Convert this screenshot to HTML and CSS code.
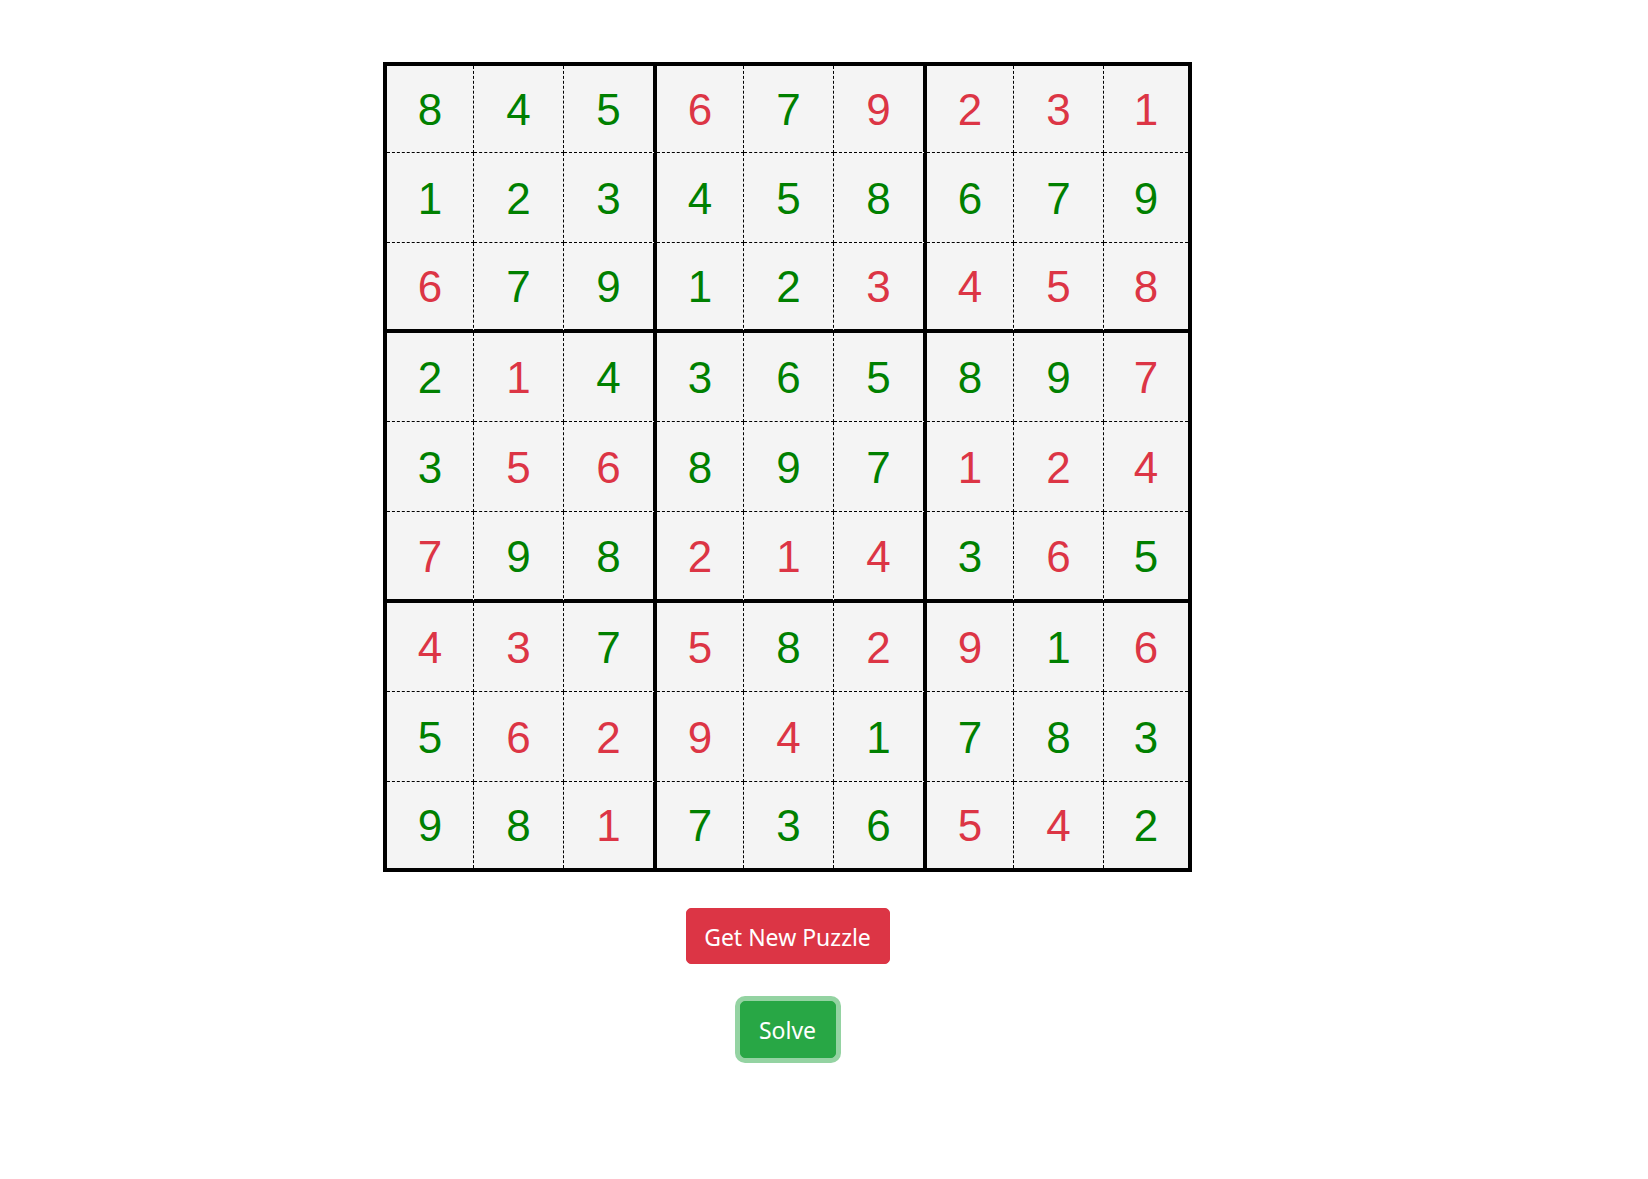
FILE: index.html
```html
<!DOCTYPE html>
<html lang="en">
<head>
<meta charset="utf-8">
<title>Sudoku</title>
<link rel="stylesheet" href="styles.css">
</head>
<body>
<div class="page">
  <div class="board">
    <div class="cell g">8</div><div class="cell g">4</div><div class="cell g">5</div><div class="cell r">6</div><div class="cell g">7</div><div class="cell r">9</div><div class="cell r">2</div><div class="cell r">3</div><div class="cell r">1</div>
    <div class="cell g">1</div><div class="cell g">2</div><div class="cell g">3</div><div class="cell g">4</div><div class="cell g">5</div><div class="cell g">8</div><div class="cell g">6</div><div class="cell g">7</div><div class="cell g">9</div>
    <div class="cell r">6</div><div class="cell g">7</div><div class="cell g">9</div><div class="cell g">1</div><div class="cell g">2</div><div class="cell r">3</div><div class="cell r">4</div><div class="cell r">5</div><div class="cell r">8</div>
    <div class="cell g">2</div><div class="cell r">1</div><div class="cell g">4</div><div class="cell g">3</div><div class="cell g">6</div><div class="cell g">5</div><div class="cell g">8</div><div class="cell g">9</div><div class="cell r">7</div>
    <div class="cell g">3</div><div class="cell r">5</div><div class="cell r">6</div><div class="cell g">8</div><div class="cell g">9</div><div class="cell g">7</div><div class="cell r">1</div><div class="cell r">2</div><div class="cell r">4</div>
    <div class="cell r">7</div><div class="cell g">9</div><div class="cell g">8</div><div class="cell r">2</div><div class="cell r">1</div><div class="cell r">4</div><div class="cell g">3</div><div class="cell r">6</div><div class="cell g">5</div>
    <div class="cell r">4</div><div class="cell r">3</div><div class="cell g">7</div><div class="cell r">5</div><div class="cell g">8</div><div class="cell r">2</div><div class="cell r">9</div><div class="cell g">1</div><div class="cell r">6</div>
    <div class="cell g">5</div><div class="cell r">6</div><div class="cell r">2</div><div class="cell r">9</div><div class="cell r">4</div><div class="cell g">1</div><div class="cell g">7</div><div class="cell g">8</div><div class="cell g">3</div>
    <div class="cell g">9</div><div class="cell g">8</div><div class="cell r">1</div><div class="cell g">7</div><div class="cell g">3</div><div class="cell g">6</div><div class="cell r">5</div><div class="cell r">4</div><div class="cell g">2</div>
  </div>
  <button class="btn btn-danger" type="button">Get New Puzzle</button>
  <button class="btn btn-success focused" type="button">Solve</button>
</div>
</body>
</html>
```

FILE: styles.css
```css
html, body {
  margin: 0;
  padding: 0;
  background: #ffffff;
}

.page {
  width: 1575px;
  padding-top: 62px;
  padding-bottom: 40px;
  display: flex;
  flex-direction: column;
  align-items: center;
  font-family: "Noto Sans", "Open Sans", sans-serif;
}

.board {
  display: grid;
  grid-template-columns: 87px 90px 93px 87px 90px 93px 87px 90px 84px;
  grid-template-rows: 87px 90px 90px 89px 90px 91px 89px 90px 86px;
  border: 4px solid #000;
  background: #f4f4f4;
}

.cell {
  box-sizing: border-box;
  display: flex;
  align-items: center;
  justify-content: center;
  padding-top: 2px;
  border-right: 1px dashed #000;
  border-bottom: 1px dashed #000;
  font-family: "Liberation Sans", Arial, sans-serif;
  font-size: 44px;
  line-height: 1;
}

.cell:nth-child(9n+3),
.cell:nth-child(9n+6) {
  border-right: 4px solid #000;
}

.cell:nth-child(9n) {
  border-right: none;
}

.cell:nth-child(n+19):nth-child(-n+27),
.cell:nth-child(n+46):nth-child(-n+54) {
  border-bottom: 4px solid #000;
}

.cell:nth-child(n+73) {
  border-bottom: none;
}

.g { color: #008000; }
.r { color: #dc3545; }

.btn {
  display: inline-flex;
  align-items: center;
  justify-content: center;
  box-sizing: border-box;
  border: 1px solid transparent;
  border-radius: 5px;
  color: #fff;
  font-family: "Noto Sans", "Open Sans", sans-serif;
  font-size: 23px;
  line-height: 1;
  padding: 2px 0 0;
  cursor: pointer;
}

.btn-danger {
  margin-top: 36px;
  width: 204px;
  height: 56px;
  background: #dc3545;
  border-color: #dc3545;
}

.btn-success {
  margin-top: 37px;
  width: 96px;
  height: 57px;
  background: #28a745;
  border-color: #28a745;
}

.focused {
  box-shadow: 0 0 0 5px #94d3a2;
  outline: none;
}
```
